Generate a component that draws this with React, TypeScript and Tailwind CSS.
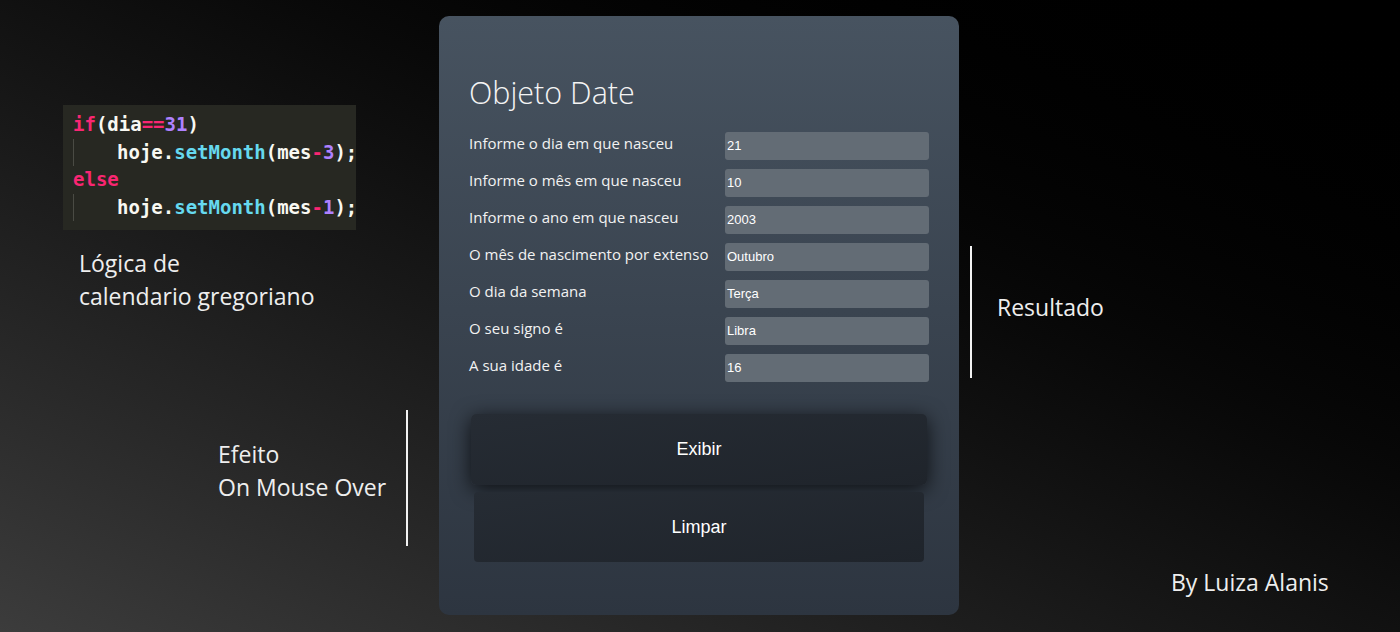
import React from "react";

const rows: [string, string][] = [
  ["Informe o dia em que nasceu", "21"],
  ["Informe o mês em que nasceu", "10"],
  ["Informe o ano em que nasceu", "2003"],
  ["O mês de nascimento por extenso", "Outubro"],
  ["O dia da semana", "Terça"],
  ["O seu signo é", "Libra"],
  ["A sua idade é", "16"],
];

const P = "text-[#f92672]";
const W = "text-[#f8f8f2]";
const C = "text-[#66d9ef]";
const V = "text-[#ae81ff]";

function Code() {
  return (
    <div
      className="ml-[63px] w-[293px] h-[125px] bg-[#272822] pt-[6px] text-[19px] leading-[27.5px] whitespace-pre font-bold"
      style={{ fontFamily: '"DejaVu Sans Mono", "Liberation Mono", monospace' }}
    >
      <div className="pl-[10px]">
        <span className={P}>if</span>
        <span className={W}>(dia</span>
        <span className={P}>==</span>
        <span className={V}>31</span>
        <span className={W}>)</span>
      </div>
      <div className="ml-[10px] border-l border-[#4a4b44] pl-[43px]">
        <span className={W}>hoje.</span>
        <span className={C}>setMonth</span>
        <span className={W}>(mes</span>
        <span className={P}>-</span>
        <span className={V}>3</span>
        <span className={W}>);</span>
      </div>
      <div className="pl-[10px]">
        <span className={P}>else</span>
      </div>
      <div className="ml-[10px] border-l border-[#4a4b44] pl-[43px]">
        <span className={W}>hoje.</span>
        <span className={C}>setMonth</span>
        <span className={W}>(mes</span>
        <span className={P}>-</span>
        <span className={V}>1</span>
        <span className={W}>);</span>
      </div>
    </div>
  );
}

const deco = { fontFamily: '"Open Sans", "Noto Sans", sans-serif' };

export default function App() {
  return (
    <div className="w-full h-[632px] overflow-hidden bg-gradient-to-tr from-[#3c3c3c] to-[#000000] flex">
      {/* left column */}
      <div className="w-[439px] shrink-0 flex flex-col pt-[105px]">
        <Code />
        <div
          className="ml-[79px] mt-[17px] text-[23px] leading-[33px] text-[#eeeeee] font-normal"
          style={deco}
        >
          <div>Lógica de</div>
          <div>calendario gregoriano</div>
        </div>
        <div className="mt-[97px] flex h-[136px]">
          <div
            className="ml-[218px] pt-[28px] w-[188px] text-[23px] leading-[33px] text-[#eeeeee] font-normal"
            style={deco}
          >
            <div>Efeito</div>
            <div className="whitespace-nowrap">On Mouse Over</div>
          </div>
          <div className="w-[2px] h-full bg-[#f2f2f2]" />
        </div>
      </div>

      {/* card */}
      <div className="mt-[16px] w-[520px] h-[599px] shrink-0 rounded-[10px] bg-gradient-to-b from-[#475360] to-[#2d3540] pl-[30px] pr-[30px] pt-[56px]">
        <h1
          className="text-[30.5px] leading-[40px] font-light text-[#f4f4f4]"
          style={deco}
        >
          Objeto Date
        </h1>
        <div className="mt-[20px] flex flex-col gap-[9px]">
          {rows.map(([label, value]) => (
            <div key={label} className="flex h-[28px]">
              <div
                className="w-[256px] shrink-0 text-[15px] leading-[22px] text-[#f2f2f2] whitespace-nowrap"
                style={deco}
              >
                {label}
              </div>
              <div
                className="w-[204px] h-[28px] rounded-[3px] bg-[#636c75] pl-[2px] flex items-center text-[13px] text-white"
                style={{ fontFamily: '"Liberation Sans", Arial, sans-serif' }}
              >
                {value}
              </div>
            </div>
          ))}
        </div>
        <div
          className="mt-[32px] flex flex-col text-[18px] text-white"
          style={{ fontFamily: '"Liberation Sans", Arial, sans-serif' }}
        >
          <div className="ml-[2px] w-[456px] h-[71px] rounded-[5px] bg-gradient-to-br from-[#262c34] to-[#1f242b] flex items-center justify-center shadow-[0_4px_20px_rgba(0,0,0,0.75)]">
            Exibir
          </div>
          <div className="mt-[7px] ml-[5px] w-[450px] h-[70px] rounded-[4px] bg-gradient-to-br from-[#262c34] to-[#1f242b] flex items-center justify-center">
            Limpar
          </div>
        </div>
      </div>

      {/* right column */}
      <div className="flex-1 flex flex-col pt-[246px]">
        <div className="ml-[11px] flex items-start h-[132px]">
          <div className="w-[2px] h-full bg-[#f2f2f2]" />
          <div
            className="ml-[25px] mt-[45px] text-[23px] leading-[33px] text-[#eeeeee] font-normal"
            style={deco}
          >
            Resultado
          </div>
        </div>
        <div
          className="ml-[212px] mt-[188px] text-[23px] leading-[33px] text-[#eeeeee] font-normal"
          style={deco}
        >
          By Luiza Alanis
        </div>
      </div>
    </div>
  );
}
